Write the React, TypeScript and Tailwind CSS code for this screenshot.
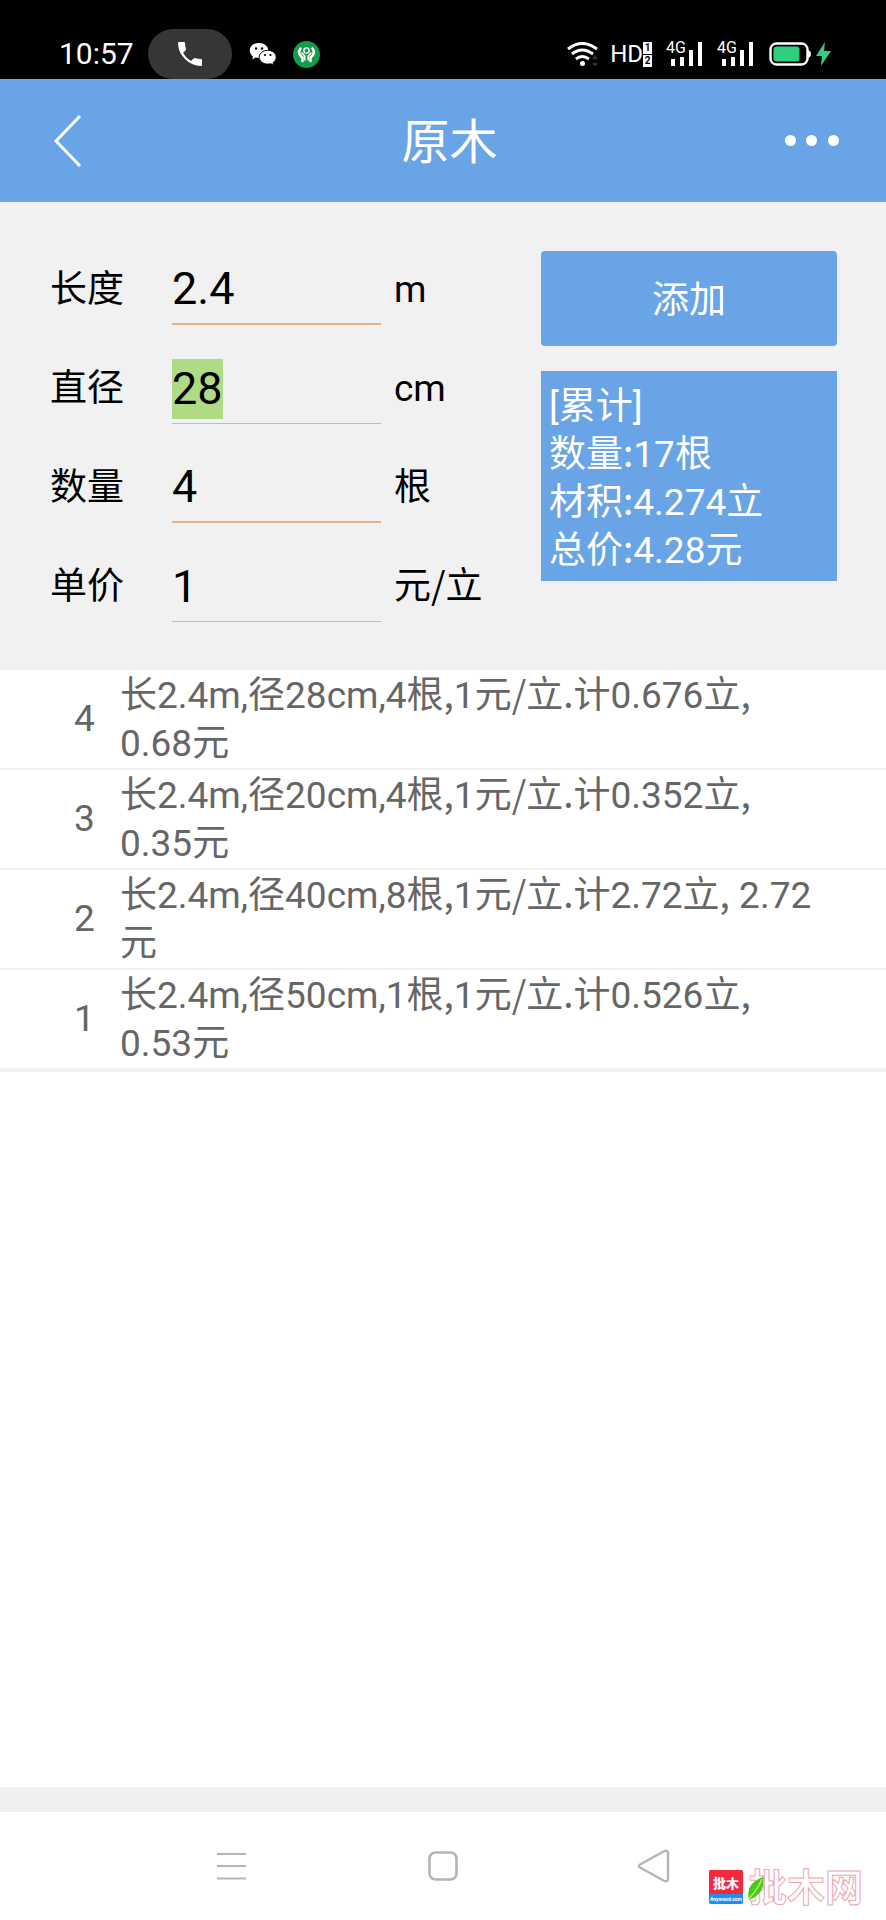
import { useEffect, useRef, useState } from 'react';

interface Field {
  id: string;
  label: string;
  value: string;
  unit: string;
}

interface LogEntry {
  no: number;
  text: string;
}

const initialFields: Field[] = [
  { id: 'length', label: '长度', value: '2.4', unit: 'm' },
  { id: 'diameter', label: '直径', value: '28', unit: 'cm' },
  { id: 'count', label: '数量', value: '4', unit: '根' },
  { id: 'price', label: '单价', value: '1', unit: '元/立' },
];

const entries: LogEntry[] = [
  { no: 4, text: '长2.4m,径28cm,4根,1元/立.计0.676立, 0.68元' },
  { no: 3, text: '长2.4m,径20cm,4根,1元/立.计0.352立, 0.35元' },
  { no: 2, text: '长2.4m,径40cm,8根,1元/立.计2.72立, 2.72元' },
  { no: 1, text: '长2.4m,径50cm,1根,1元/立.计0.526立, 0.53元' },
];

const summary = ['[累计]', '数量:17根', '材积:4.274立', '总价:4.28元'];

// Punctuation that follows a Chinese character is set in the Chinese font
const MixedText = ({ text }: { text: string }) => (
  <>
    {text.split(/((?<=[\u4e00-\u9fff])[,./:])/).map((part, i) =>
      i % 2 === 1 ? (
        <span key={i} className="font-['Noto_Sans_CJK_SC',sans-serif] leading-none">
          {part}
        </span>
      ) : (
        part
      )
    )}
  </>
);

const SignalIcon = () => (
  <div className="relative h-6 w-9">
    <span className="absolute -top-[2px] left-0 text-base leading-4">4G</span>
    <svg className="h-6 w-9" viewBox="0 0 36 24" fill="currentColor">
      <rect x="5" y="17" width="4" height="7" />
      <rect x="14" y="15" width="4" height="9" />
      <rect x="23" y="8" width="4" height="16" />
      <rect x="32" y="0" width="4" height="24" />
    </svg>
  </div>
);

const StatusBar = () => (
  <div className="flex h-[79px] items-end justify-between bg-black pr-[55px] pl-[59px] text-white">
    <div className="flex h-[50px] items-center">
      <span className="w-[73px] text-3xl">10:57</span>
      <div className="ml-4 flex h-[50px] w-[84px] items-center justify-center rounded-full bg-[#363636]">
        <svg className="h-[26px] w-[26px]" viewBox="0 0 26 26" fill="currentColor">
          <path d="M1 2Q1 1 2 1H7Q8 1 8 2Q8 5 9 8Q9 9 8 10L6 12Q9 17 14 20L16 18Q17 17 18 17Q21 18 24 18Q25 18 25 19V24Q25 25 24 25Q15 25 8 18Q1 11 1 2Z" />
        </svg>
      </div>
      {/* WeChat */}
      <svg className="ml-[17px] h-[26px] w-[28px]" viewBox="0 0 28 26">
        <path
          d="M10 2C4.500 2 .8 5.300.8 9.600c0 2.500 1.200 4.400 3.200 5.900l-.9 3 3.500-1.900c1 .3 2.200.5 3.400.5 5.200 0 9.300-3.200 9.300-7.500S15.200 2 10 2z"
          fill="#fff"
        />
        <path
          d="M18.700 9.300c-4.700 0-8.500 3-8.500 6.900s3.800 6.900 8.500 6.900c1 0 2-.2 2.900-.4l3.200 1.700-.8-2.700c1.900-1.300 3.200-3.300 3.200-5.500 0-3.900-3.800-6.900-8.500-6.900z"
          fill="#fff"
          stroke="#000"
        />
        <circle cx="7" cy="7.500" r="1.200" />
        <circle cx="13" cy="7.500" r="1.200" />
        <circle cx="16" cy="14" r="1.100" />
        <circle cx="21.500" cy="14" r="1.100" />
      </svg>
      <svg className="ml-4 h-[27px] w-[27px]" viewBox="0 0 27 27">
        <circle cx="13.500" cy="13.500" r="13.500" fill="#149c4c" />
        <g fill="none" stroke="#fff" strokeLinecap="round">
          <circle cx="13.500" cy="9.500" r="2.600" strokeWidth="1.400" />
          <path d="M7.500 7.500C5 11 6 14 9.500 16.500V20M19.500 7.500C22 11 21 14 17.500 16.500V20" strokeWidth="2.600" />
          <path d="M9 12L11.800 15V19M18 12L15.200 15V19" strokeWidth="1.500" />
        </g>
      </svg>
    </div>

    <div className="flex h-[50px] items-center">
      <svg className="h-6 w-8" viewBox="0 0 32 24" fill="none" stroke="#fff" strokeWidth="3">
        <path d="M1 7Q15 -4 30 7M5 12Q15 4 26 12M9 17Q15 12 22 17" />
        <circle cx="15.500" cy="21.500" r="2.500" fill="#fff" stroke="none" />
        <path d="M26 17l2-2 2 2M26 21l2 2 2-2" stroke="#333" strokeWidth="2" />
      </svg>
      <span className="ml-[11px] text-2xl">HD</span>
      <div className="flex h-6 w-[9px] flex-col gap-px text-center text-[10px] leading-3 font-bold text-black">
        <span className="h-3 bg-white">1</span>
        <span className="h-3 bg-white">2</span>
      </div>
      <div className="ml-[14px] flex gap-[15px]">
        <SignalIcon />
        <SignalIcon />
      </div>
      <svg className="ml-4 h-6 w-[62px]" viewBox="0 0 62 24">
        <rect x="1.500" y="1.500" width="37" height="21" rx="6" fill="none" stroke="#fff" strokeWidth="2.400" />
        <path d="M39 8Q42 9 42 12Q42 15 39 16Z" fill="#fff" />
        <rect x="4.500" y="4.500" width="26" height="15" rx="3" fill="#2ecf7d" />
        <path d="M56 0L47 14H53L52 24L62 9H55Z" fill="#2ecf7d" />
      </svg>
    </div>
  </div>
);

const Header = () => (
  <header className="flex h-[123px] items-center justify-between bg-[#69a4e6] pr-[47px] pl-[54px] text-white">
    <button type="button" aria-label="返回" className="flex h-16 w-[60px] items-center">
      <svg className="h-[52px] w-7" viewBox="0 0 28 52" fill="none" stroke="currentColor" strokeWidth="3">
        <path d="M26 1L2 26L26 51" />
      </svg>
    </button>
    <h1 className="pt-1 text-5xl">原木</h1>
    <button type="button" aria-label="更多" className="flex h-16 w-[54px] items-center justify-between">
      <span className="size-[11px] shrink-0 rounded-full bg-white"></span>
      <span className="size-[11px] shrink-0 rounded-full bg-white"></span>
      <span className="size-[11px] shrink-0 rounded-full bg-white"></span>
    </button>
  </header>
);

const Watermark = () => (
  <div className="pointer-events-none absolute right-[18px] bottom-[6px]">
    <svg className="h-[58px] w-[160px]" viewBox="0 -10 160 58">
      <rect x="1" y="4" width="34" height="34" rx="2" fill="#1d8ff2" />
      <path d="M1 6Q1 4 3 4H33Q35 4 35 6V26Q35 28 32 28H4Q1 28 1 30Z" fill="#f5293e" />
      <text x="18" y="22" textAnchor="middle" fontSize="13" fontWeight="900" fill="#fff">
        批木
      </text>
      <text x="18" y="35" textAnchor="middle" fontSize="5" fontWeight="700" fill="#fff">
        Anywood.com
      </text>
      <text x="41" y="35" fontSize="38" fontWeight="700" fill="#fff" stroke="#eba9ae" strokeWidth="1">
        批木网
      </text>
      <path d="M55 11C44 15 38 22 41 34C52 30 57 22 55 11Z" fill="#4cc91c" />
      <path d="M54 13C51 21 46 27 41 33" fill="none" stroke="#a8ef5c" strokeWidth="1.500" />
    </svg>
  </div>
);

const NavBar = () => (
  <nav className="relative h-[108px] bg-white px-[126px] text-[#b5b5b5]">
    <div className="flex h-full">
      <button type="button" aria-label="最近任务" className="flex flex-1 items-center justify-center">
        <svg className="size-9" viewBox="0 0 36 36" stroke="currentColor" strokeWidth="2">
          <path d="M3 6H32M3 18H32M3 30.500H32" />
        </svg>
      </button>
      <button type="button" aria-label="主屏幕" className="flex flex-1 items-center justify-center">
        <svg className="size-9" viewBox="0 0 36 36" fill="none" stroke="currentColor" strokeWidth="2.600">
          <rect x="4.500" y="4.500" width="27" height="27" rx="6" />
        </svg>
      </button>
      <button type="button" aria-label="后退" className="flex flex-1 items-center justify-center">
        <svg className="size-9" viewBox="0 0 36 36" fill="none" stroke="currentColor" strokeWidth="2.400" strokeLinejoin="round">
          <path d="M4 16.500L28.500 3Q32 2 32 5V31Q32 34 28.500 33L4 19.500Q2 18 4 16.500Z" />
        </svg>
      </button>
    </div>
    <Watermark />
  </nav>
);

const App = () => {
  const [fields, setFields] = useState(initialFields);
  const activeRef = useRef<HTMLInputElement>(null);

  useEffect(() => {
    activeRef.current?.focus();
    activeRef.current?.select();
  }, []);

  const update = (id: string, value: string) =>
    setFields((prev) => prev.map((f) => (f.id === id ? { ...f, value } : f)));

  return (
    <div className="flex min-h-screen flex-col bg-white font-[Roboto,'Noto_Sans_CJK_SC',sans-serif]">
      <StatusBar />
      <Header />

      <form className="flex justify-between bg-[#f1f1f1] pt-6 pr-[49px] pb-12 pl-[50px] text-[37px] text-black">
        <div>
          {fields.map((f) => (
            <div key={f.id} className="group flex h-[99px] items-end">
              <label htmlFor={f.id} className="w-[122px] pb-2 leading-[54px]">
                {f.label}
              </label>
              <input
                id={f.id}
                ref={f.id === 'diameter' ? activeRef : undefined}
                value={f.value}
                onChange={(e) => update(f.id, e.target.value)}
                inputMode="decimal"
                className="w-[209px] border-b-2 border-[#e6b28c] pb-1 text-[45px] leading-[60px] outline-none group-even:border-b selection:bg-[#b0db85] selection:text-black"
              />
              <span className="pb-2 pl-[13px] leading-[54px]">
                <MixedText text={f.unit} />
              </span>
            </div>
          ))}
        </div>

        <div className="w-[296px] pt-[25px] text-white">
          <button type="button" className="h-[95px] w-full rounded-sm bg-[#69a4e6] pt-1">
            添加
          </button>
          <div className="mt-[25px] bg-[#69a4e6] px-2 pt-3 pb-[6px] leading-[48px]">
            {summary.map((line) => (
              <p key={line}>
                <MixedText text={line} />
              </p>
            ))}
          </div>
        </div>
      </form>

      {/* Saved records, newest first */}
      <ul className="border-b-2 border-[#f1f1f1] text-[37px] text-[#666666]">
        {entries.map((entry) => (
          <li key={entry.no} className="flex items-center border-b-2 border-[#f1f1f1] pr-[66px] leading-[48px]">
            <span className="w-[120px] shrink-0 pl-[74px]">{entry.no}</span>
            <p className="pt-[2px]">
              <MixedText text={entry.text} />
            </p>
          </li>
        ))}
      </ul>

      <div className="flex-1"></div>
      <div className="h-[25px] bg-[#f0f0f0]"></div>
      <NavBar />
    </div>
  );
};

export default App;
